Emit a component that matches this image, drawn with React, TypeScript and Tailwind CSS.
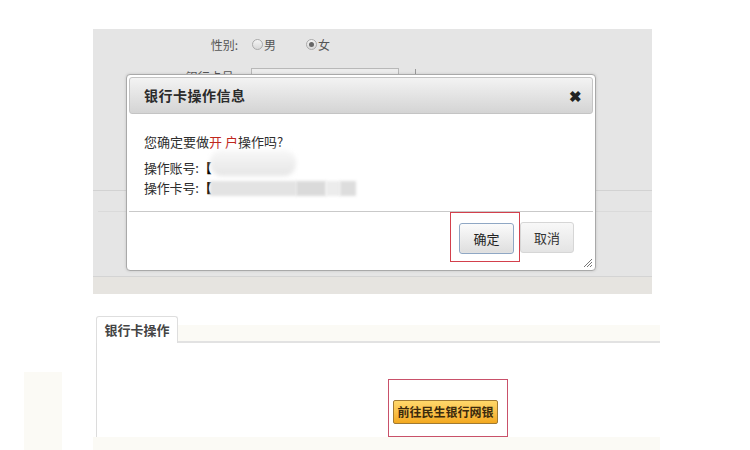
import React from 'react';

const font = { fontFamily: '"Noto Sans CJK SC", "Liberation Sans", sans-serif' };

function ResizeGrip() {
  return (
    <svg width="11" height="11" viewBox="0 0 11 11" className="block">
      <path d="M10 2 L2 10 M10 5 L5 10 M10 8 L8 10" stroke="#777" strokeWidth="1" fill="none" />
    </svg>
  );
}

function Radio({ checked }: { checked?: boolean }) {
  return (
    <span className="inline-flex w-[11px] h-[11px] rounded-full border border-[#aaa] bg-gradient-to-b from-[#f4f4f4] to-[#d8d8d8] items-center justify-center mr-[1px]">
      {checked && <span className="w-[5px] h-[5px] rounded-full bg-[#666]" />}
    </span>
  );
}

function ConfirmDialog() {
  return (
    <div className="absolute left-[33px] top-[45px] w-[470px] h-[197px] bg-white border border-[#a9a9a9] rounded-[4px] shadow-[0_0_3px_rgba(0,0,0,0.15)] p-[2px] flex flex-col">
      {/* 标题栏 */}
      <div className="h-[37px] shrink-0 rounded-[3px] border border-[#c4c4c4] bg-gradient-to-b from-[#f3f3f3] to-[#d4d4d4] flex items-center justify-between pl-[14px] pr-[10px]">
        <span className="text-[14px] font-bold text-[#2b2b2b] tracking-[0.5px]">银行卡操作信息</span>
        <span className="text-[15px] font-bold text-[#222] leading-none">✖</span>
      </div>

      {/* 内容 */}
      <div className="h-[97px] shrink-0 pl-[15px] pt-[18px] text-[13px] text-[#2e2e2e] leading-[20px]">
        <div>
          您确定要做<span className="text-[#c0271d]">开&nbsp;户</span>操作吗?
        </div>
        <div className="mt-[6px] flex items-center">
          <span className="tracking-[-0.2px]">
            操作账号:<b className="font-black text-black">【</b>
          </span>
          <span className="w-[86px] h-[26px] -mt-[10px] -ml-[1px] rounded-[12px] bg-gradient-to-b from-[#f8f8f8] to-[#e6e6e6] blur-[2px]" />
        </div>
        <div className="flex items-center">
          <span className="tracking-[-0.2px]">
            操作卡号:<b className="font-black text-black">【</b>
          </span>
          <span className="w-[86px] h-[15px] -ml-[1px] bg-[#e3e3e3] blur-[1.5px]" />
          <span className="w-[30px] h-[15px] bg-[#dadada] blur-[1.5px]" />
          <span className="w-[14px] h-[15px] bg-[#ececec] blur-[1.5px]" />
          <span className="w-[16px] h-[15px] bg-[#dddddd] blur-[1.5px]" />
        </div>
      </div>

      <div className="h-px bg-[#c9c9c9] shrink-0" />

      {/* 按钮 */}
      <div className="flex-1 flex justify-end items-start pr-[19px]">
        <div className="border border-[#d3404c] pt-[10px] pb-[7px] pl-[8px] pr-[5px]">
          <button className="w-[55px] h-[31px] rounded-[3px] border border-[#8fa7c4] bg-gradient-to-b from-[#fbfbfb] to-[#dedede] text-[13px] text-[#222] shadow-[inset_0_0_1px_#fff]">
            确定
          </button>
        </div>
        <div className="pt-[10px]">
          <button className="w-[54px] h-[31px] rounded-[3px] border border-[#d6d6d6] bg-gradient-to-b from-[#f8f8f8] to-[#e4e4e4] text-[13px] text-[#333]">
            取消
          </button>
        </div>
      </div>
      <div className="absolute right-[2px] bottom-[2px]">
        <ResizeGrip />
      </div>
    </div>
  );
}

export default function App() {
  return (
    <div className="w-[750px] h-[450px] bg-white overflow-hidden" style={font}>
      {/* 上部表单面板 */}
      <div className="ml-[93px] mt-[29px] w-[559px] h-[265px] bg-[#e5e5e5] relative flex flex-col">
        <div className="h-[30px] flex items-center text-[12px] text-[#555] pt-[1px]">
          <span className="w-[145px] text-right">性别:</span>
          <span className="ml-[14px] inline-flex items-center">
            <Radio />男
          </span>
          <span className="ml-[30px] inline-flex items-center">
            <Radio checked />女
          </span>
        </div>
        <div className="h-[40px] flex items-start text-[12px] text-[#555] pt-[9px]">
          {/* 被弹窗遮住的标签，只露出上沿 */}
          <span className="w-[145px] h-[6px] mt-[2px] overflow-hidden flex justify-end">
            <span className="leading-[14px] pr-[1px]">银行卡号:</span>
          </span>
          <span className="ml-[13px] w-[148px] h-[24px] border border-[#b8b8b8] bg-[#ececec]" />
          <span className="ml-[16px] mt-[1px] w-px h-[5px] bg-[#999]" />
        </div>
        <div className="h-[91px]" />
        <div className="h-px bg-[#d2d2d2]" />
        <div className="h-[20px]" />
        <div className="h-px bg-[#dadada] ml-[5px]" />
        <div className="flex-1" />
        <div className="h-[18px] border-t border-[#d4d4d4] bg-[#e6e4e0]" />
        <ConfirmDialog />
      </div>

      {/* 下部 银行卡操作 */}
      <div className="flex mt-[22px]">
        <div className="w-[24px] shrink-0" />
        <div className="w-[38px] shrink-0 mt-[56px] h-[78px] bg-[#fbfaf5]" />
        <div className="w-[31px] shrink-0" />
        <div className="w-[567px] shrink-0 flex flex-col">
          <div className="flex h-[27px] pl-[3px]">
            <div className="w-[82px] h-[27px] border border-b-0 border-[#dedede] rounded-t-[3px] bg-white flex items-center justify-center text-[13px] font-bold text-[#444]">
              银行卡操作
            </div>
            <div className="flex-1 flex flex-col">
              <div className="h-[9px]" />
              <div className="flex-1 bg-[#fbfaf5] border-b-2 border-[#e2e2e2]" />
            </div>
          </div>
          <div className="h-[94px] ml-[3px] border-l border-[#dcdcdc] bg-white flex items-start">
            <div className="ml-[291px] mt-[36px] border border-[#c9516a] h-[58px] w-[120px] pl-[4px] pt-[18px]">
              <button className="w-[105px] h-[24px] rounded-[2px] border border-[#a07a34] bg-gradient-to-b from-[#ffd86a] to-[#f3a91d] text-[12px] font-bold text-[#3b2a0c] leading-none">
                前往民生银行网银
              </button>
            </div>
          </div>
          <div className="h-[13px] bg-[#fbfaf5]" />
        </div>
      </div>
    </div>
  );
}
